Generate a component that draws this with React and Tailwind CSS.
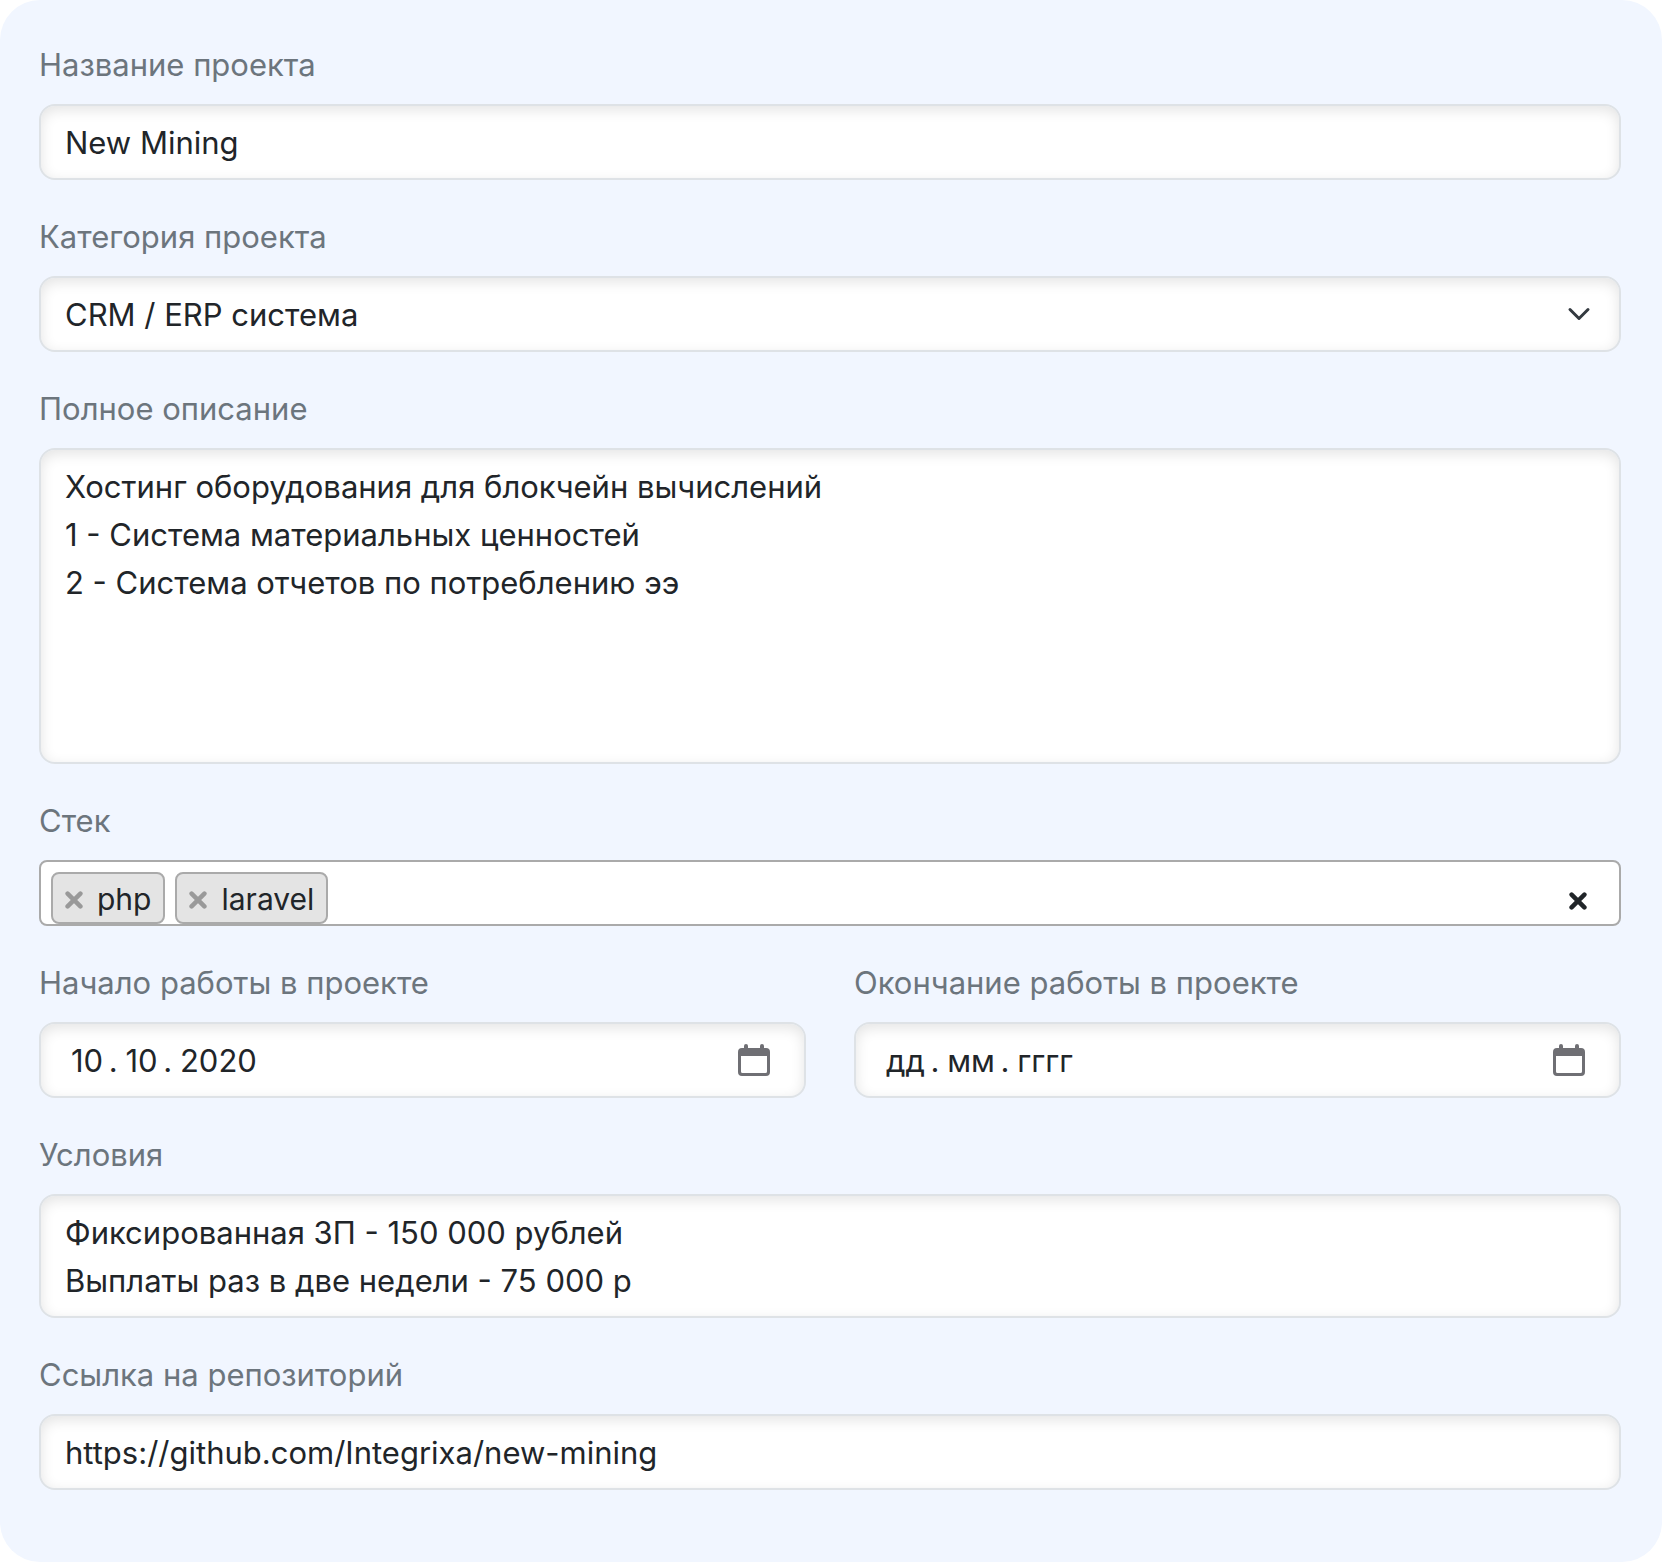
import React from "react";

const control =
    "block w-full rounded-2xl border-2 border-[#dee2e6] bg-white pt-[13px] pb-[11px] text-[31px] leading-[48px] text-[#212529] shadow-[inset_0_4px_14px_rgba(0,0,0,0.11)] outline-none";

function Field({ id, label, children }) {
    return (
        <div className="flex min-w-0 flex-1 flex-col gap-[15px]">
            <label
                htmlFor={id}
                className="text-[31px] leading-[48px] text-[#6c757d]"
            >
                {label}
            </label>
            {children}
        </div>
    );
}

function Cross() {
    return (
        <svg viewBox="0 0 18 18" className="size-[18px]" aria-hidden="true">
            <path
                d="M2.600 2.600 15.400 15.400M15.400 2.600 2.600 15.400"
                stroke="currentColor"
                strokeWidth="4.500"
                strokeLinecap="round"
                fill="none"
            />
        </svg>
    );
}

function Tag({ name }) {
    return (
        <li className="flex h-[52px] items-center gap-3.5 rounded-lg border-2 border-[#aaa] bg-[#e4e4e4] px-3">
            <button
                type="button"
                aria-label={`Удалить ${name}`}
                className="pt-1 text-[#999]"
            >
                <Cross />
            </button>
            <span className="pt-0.5 text-[30px] leading-[48px]">{name}</span>
        </li>
    );
}

function DateField({ id, label, ...props }) {
    return (
        <Field id={id} label={label}>
            <div className={`${control} flex items-center pr-[34px] pl-[30px]`}>
                <input
                    id={id}
                    type="text"
                    inputMode="numeric"
                    className="min-w-0 flex-1 bg-transparent outline-none placeholder:text-[#212529]"
                    {...props}
                />
                <button
                    type="button"
                    aria-label="Открыть календарь"
                    className="pb-0.5 text-[#6f6f74]"
                >
                    <svg viewBox="0 0 32 32" className="size-8" aria-hidden="true">
                        <path
                            fill="currentColor"
                            fillRule="evenodd"
                            d="M6 4V2a2 2 0 0 1 4 0v2h12V2a2 2 0 0 1 4 0v2h2a4 4 0 0 1 4 4v20a4 4 0 0 1-4 4H4a4 4 0 0 1-4-4V8a4 4 0 0 1 4-4zM3 12v15.500a1.500 1.500 0 0 0 1.500 1.500h23a1.500 1.500 0 0 0 1.500-1.500V12z"
                        />
                    </svg>
                </button>
            </div>
        </Field>
    );
}

export default function App() {
    return (
        <form className="flex flex-col gap-[33px] rounded-[40px] bg-[#f1f6ff] pt-[41px] pr-[41px] pb-[72px] pl-[39px] font-['Inter','Liberation_Sans',sans-serif] text-[#212529]">
            <Field id="name" label="Название проекта">
                <input
                    id="name"
                    type="text"
                    defaultValue="New Mining"
                    className={`${control} px-6`}
                />
            </Field>

            <Field id="category" label="Категория проекта">
                <div className="relative">
                    <select
                        id="category"
                        defaultValue="crm"
                        className={`${control} appearance-none pr-20 pl-6`}
                    >
                        <option value="crm">CRM / ERP система</option>
                    </select>
                    <svg
                        viewBox="0 0 16 16"
                        className="pointer-events-none absolute inset-y-0 right-[30px] my-auto size-6"
                        aria-hidden="true"
                    >
                        <path
                            d="m2 5 6 6 6-6"
                            fill="none"
                            stroke="#343a40"
                            strokeWidth="2"
                            strokeLinecap="round"
                            strokeLinejoin="round"
                        />
                    </svg>
                </div>
            </Field>

            <Field id="description" label="Полное описание">
                <textarea
                    id="description"
                    rows={6}
                    defaultValue={
                        "Хостинг оборудования для блокчейн вычислений\n1 - Система материальных ценностей\n2 - Система отчетов по потреблению ээ"
                    }
                    className={`${control} resize-none px-6`}
                />
            </Field>

            <Field id="stack" label="Стек">
                <div className="flex items-start rounded-lg border-2 border-[#aaa] bg-white pt-2.5 pr-8 pl-2.5">
                    <ul className="flex gap-2.5">
                        <Tag name="php" />
                        <Tag name="laravel" />
                    </ul>
                    <input
                        id="stack"
                        type="text"
                        className="h-[52px] min-w-0 flex-1 bg-transparent px-2 text-[30px] outline-none"
                    />
                    <button
                        type="button"
                        aria-label="Очистить"
                        className="pt-5"
                    >
                        <Cross />
                    </button>
                </div>
            </Field>

            <div className="flex gap-12">
                <DateField
                    id="start"
                    label="Начало работы в проекте"
                    defaultValue={"10\u2009.\u200510\u2009.\u20052020"}
                />
                <DateField
                    id="end"
                    label="Окончание работы в проекте"
                    placeholder={"дд\u2009.\u2005мм\u2009.\u2005гггг"}
                />
            </div>

            <Field id="terms" label="Условия">
                <textarea
                    id="terms"
                    rows={2}
                    defaultValue={
                        "Фиксированная ЗП - 150 000 рублей\nВыплаты раз в две недели - 75 000 р"
                    }
                    className={`${control} resize-none px-6`}
                />
            </Field>

            <Field id="repo" label="Ссылка на репозиторий">
                <input
                    id="repo"
                    type="url"
                    defaultValue="https://github.com/Integrixa/new-mining"
                    className={`${control} px-6`}
                />
            </Field>
        </form>
    );
}
